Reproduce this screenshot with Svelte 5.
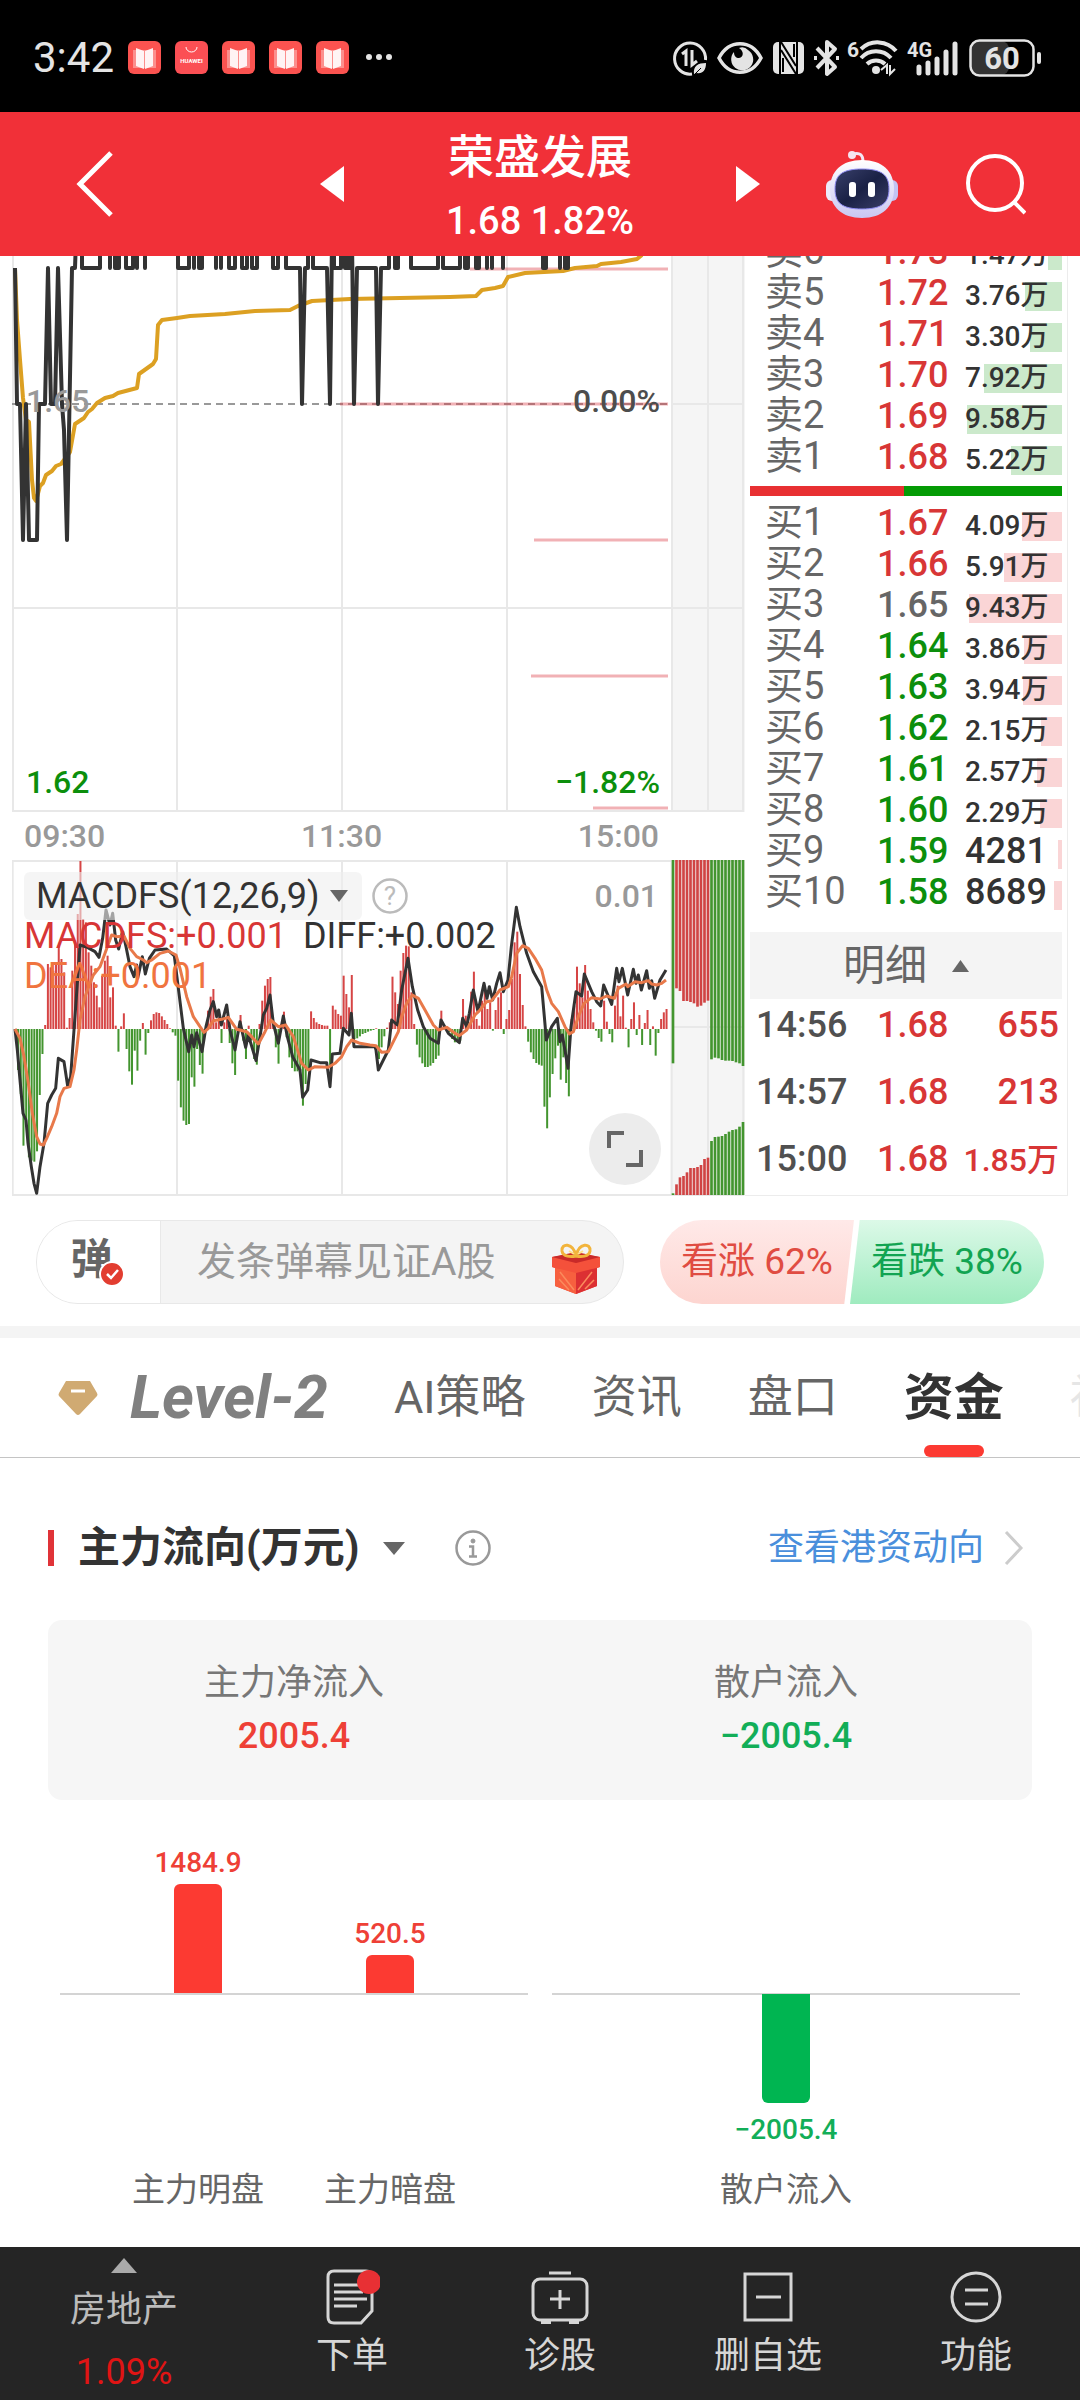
<script lang="ts">
    type Row = { name: string; price: string; volume: string; size: number; tone: string };

    const sells: Row[] = [
        { name: "卖6", price: "1.73", volume: "1.47万", size: 14, tone: "up" },
        { name: "卖5", price: "1.72", volume: "3.76万", size: 37, tone: "up" },
        { name: "卖4", price: "1.71", volume: "3.30万", size: 32, tone: "up" },
        { name: "卖3", price: "1.70", volume: "7.92万", size: 78, tone: "up" },
        { name: "卖2", price: "1.69", volume: "9.58万", size: 95, tone: "up" },
        { name: "卖1", price: "1.68", volume: "5.22万", size: 51, tone: "up" }
    ];

    const buys: Row[] = [
        { name: "买1", price: "1.67", volume: "4.09万", size: 40, tone: "up" },
        { name: "买2", price: "1.66", volume: "5.91万", size: 58, tone: "up" },
        { name: "买3", price: "1.65", volume: "9.43万", size: 93, tone: "flat" },
        { name: "买4", price: "1.64", volume: "3.86万", size: 38, tone: "down" },
        { name: "买5", price: "1.63", volume: "3.94万", size: 39, tone: "down" },
        { name: "买6", price: "1.62", volume: "2.15万", size: 21, tone: "down" },
        { name: "买7", price: "1.61", volume: "2.57万", size: 25, tone: "down" },
        { name: "买8", price: "1.60", volume: "2.29万", size: 22, tone: "down" },
        { name: "买9", price: "1.59", volume: "4281", size: 4, tone: "down" },
        { name: "买10", price: "1.58", volume: "8689", size: 8, tone: "down" }
    ];

    const trades = [
        { time: "14:56", price: "1.68", volume: "655" },
        { time: "14:57", price: "1.68", volume: "213" },
        { time: "15:00", price: "1.68", volume: "1.85万" }
    ];

    // stretches where the price rests one tick lower, as [from, to]
    const dips = (list: number[][]) => list.map(([a, b]) => `L${a} 240L${a} 268L${b} 268L${b} 240`).join("");

    const pricePath =
        "M15 268L17 404L20 404L23 540L26 404L29 540L37 540L39 404L45 404L48 268L51 404L55 404L58 268L62 404L64 430L67 540L72 268L75 268L76 240" +
        dips([[82, 100], [110, 110], [115, 119], [126, 133], [137, 137], [145, 145], [178, 189], [194, 194], [199, 202], [216, 216], [221, 221], [229, 235], [242, 247], [252, 257], [273, 278]]) +
        "L286 240L286 268L300 268L302 404L305 268L308 268L308 240L313 240L313 268L327 268L330 404L332 240" +
        dips([[334, 341], [345, 349]]) +
        "L352 240L354 404L357 268L376 268L378 404L381 268L389 268L389 240" +
        dips([[395, 398], [411, 438], [443, 460], [465, 468], [476, 479], [487, 487], [492, 492], [503, 503], [543, 546], [560, 560], [565, 568]]);

    const averageLine =
        "15,268 17,320 20,360 23,398 26,420 29,422 32,480 34,498 36,501 40,486 43,483 46,475 52,471 56,466 61,464 64,460 70,452 75,424 84,418 88,412 92,409 97,403 105,398 113,396 118,393 137,388 139,374 153,364 156,359 158,325 162,320 177,318 190,316 225,314 255,311 290,310 298,306 312,301 350,299 400,298 450,297 476,296 482,290 495,288 503,286 508,277 525,273 563,271 575,268 597,266 601,264 621,262 637,259 642,255";

    // MACDFS histogram, one value per minute
    const macd = [
        0, -123, -195, -350, -270, -385, -395, -398, -367, -198, -75, 12, 195, 185, 175, 200, 250, 210, 170, 4,
        33, 175, 265, 345, 504, 330, 320, 230, 190, 140, 100, 65, 160, 205, 220, 95, 125, 10, -68, 8,
        47, -60, -127, -167, -65, -125, -35, 18, -77, -12, 26, 45, 50, 48, 38, 27, 15, 2, -10, -20,
        -155, -235, -275, -288, -285, -145, -173, -60, -108, -134, -10, 55, 97, 120, 20, 35, -42, 20, 37, -42,
        -103, -138, -20, 42, -35, -90, 10, -35, -90, -107, 15, 85, 130, 150, 156, 20, -55, -104, 15, 52,
        -25, -85, -117, -127, -127, -125, -230, -165, -125, 53, 33, 20, 15, 12, 10, 10, -112, 70, 58, 45,
        40, 160, 105, 65, 162, -30, -28, -22, -15, -12, -8, -5, -3, 2, -90, -55, -22, 4, 20, 157,
        110, 75, 175, 228, 250, 248, 110, 15, -47, -85, -103, -114, -114, -110, -102, -90, -80, 55, 12, 3,
        -10, -30, -40, -40, -35, 90, 40, 10, 112, 172, 30, 10, 85, 115, 60, 80, -5, 57, 95, 110,
        -15, 30, 57, 150, 260, 292, 165, 72, 8, -38, -70, -90, -102, -107, -110, -233, -298, -205, -135, -88,
        -50, -152, -85, -162, -202, 30, 70, 187, 137, 95, 192, 115, 60, 20, -5, -27, -38, 85, 22, -15,
        -40, 70, 130, 38, 100, 4, -55, 30, 80, -18, 42, -48, 18, 57, -48, 8, -80, -12, 30, 50, 60
    ];

    const diffLine =
        "45,537 52,600 60,690 69,790 78,810 84,880 94,950 102,1000 110,1030 120,950 132,880 143,760 155,735 167,715 175,625 192,635 203,708 212,680 222,540 232,400 240,285 262,292 285,305 297,322 308,265 318,180 330,225 338,190 347,270 356,297 368,245 378,290 390,350 402,380 410,345 413,385 427,320 436,372 448,325 465,300 500,297 523,318 537,430 550,535 566,605 575,555 582,590 590,548 606,605 618,530 630,480 640,455 650,500 656,480 664,525 680,465 690,540 705,600 720,515 737,592 745,555 768,632 780,560 790,495 800,475 810,435 820,520 835,580 850,498 862,560 878,620 900,660 908,742 923,720 933,630 960,638 980,638 990,710 997,612 1020,610 1030,535 1047,555 1054,490 1062,590 1125,590 1128,600 1135,660 1150,630 1165,600 1175,510 1192,525 1205,420 1224,325 1237,410 1253,480 1270,530 1290,565 1315,580 1323,510 1345,550 1378,578 1388,505 1400,530 1408,490 1420,420 1434,485 1452,400 1461,445 1468,410 1478,450 1490,400 1500,368 1510,425 1524,390 1534,290 1549,172 1560,230 1580,310 1600,365 1625,410 1633,500 1639,570 1655,530 1672,505 1680,575 1687,555 1704,655 1713,530 1728,425 1745,438 1753,372 1775,425 1790,455 1802,468 1811,405 1835,463 1850,355 1857,395 1867,355 1883,435 1900,358 1908,400 1915,375 1924,420 1940,362 1948,415 1955,392 1964,445 1980,390 1998,360";

    const deaLine =
        "45,537 60,565 72,620 85,700 97,790 110,860 120,882 130,885 140,865 155,830 170,790 180,740 192,715 210,710 222,660 230,600 240,510 255,440 270,400 280,375 300,350 315,310 335,255 350,260 372,258 390,295 410,320 430,330 440,338 455,330 480,310 505,303 528,315 540,355 560,440 580,500 600,530 612,547 625,535 640,512 665,508 685,502 710,538 740,545 755,560 775,582 795,545 812,510 835,530 857,525 880,560 905,640 925,660 945,650 985,652 1005,640 1025,620 1040,590 1055,570 1080,580 1110,585 1128,587 1145,607 1165,605 1180,575 1195,545 1205,500 1220,460 1237,435 1255,445 1275,480 1300,525 1315,540 1340,532 1365,550 1378,557 1400,540 1425,495 1440,480 1460,455 1475,452 1500,420 1525,410 1535,380 1550,310 1568,287 1585,295 1605,325 1625,360 1640,420 1655,460 1675,485 1695,530 1708,552 1720,545 1735,500 1752,460 1775,443 1800,447 1820,438 1843,445 1855,415 1878,402 1883,410 1905,395 1925,398 1945,392 1955,402 1970,405 1985,400 1998,390";

    // auction columns beside the histogram: where the top and bottom blocks end
    const auctionTop = [640, 415, 423, 453, 453, 456, 460, 470, 467, 458, 452, 628, 623, 625, 630, 632, 632, 633, 637, 640, 648];
    const auctionBottom = [1030, 1003, 982, 978, 967, 954, 954, 951, 945, 927, 923, 873, 861, 860, 858, 852, 845, 840, 838, 830, 816];
    const auctionColor = (i: number) => (i > 0 && i < 11 ? "#d04444" : "#43952f");

    const tabs = ["AI策略", "资讯", "盘口", "资金", "社区"];
    const activeTab = "资金";

    const mainFlow = [
        { name: "主力明盘", value: "1484.9", height: 109 },
        { name: "主力暗盘", value: "520.5", height: 38 }
    ];
</script>

{#snippet bookApp()}
    <svg width="33" height="33" viewBox="0 0 33 33">
        <rect width="33" height="33" rx="6" fill="#fb5350" />
        <path d="M5 9h23v18H5z" fill="#fff" opacity=".35" />
        <path d="M8 7l8 3v18l-8-3zM25 7l-8 3v18l8-3z" fill="#fff" opacity=".9" />
    </svg>
{/snippet}

{#snippet book(rows: Row[], side: string, caption: string)}
    <table class="book {side}" aria-label={caption}>
        <tbody>
            {#each rows as row}
                <tr>
                    <th scope="row">{row.name}</th>
                    <td class="price {row.tone}">{row.price}</td>
                    <td class="volume">
                        <i class="depth" style="width: {row.size}px"></i>
                        <span class:small={row.volume.endsWith("万")}>{row.volume}</span>
                    </td>
                </tr>
            {/each}
        </tbody>
    </table>
{/snippet}

<div class="page">
    <div class="status">
        <div class="status-left">
            <span class="clock">3:42</span>
            {@render bookApp()}
            <svg width="33" height="33" viewBox="0 0 33 33">
                <rect width="33" height="33" rx="6" fill="#fb4f54" />
                <path d="M11 6a5.500 5 0 0 0 11 0" fill="none" stroke="#fff" stroke-width="1" />
                <text x="16.500" y="22" font-size="6" font-weight="700" text-anchor="middle" fill="#fff">HUAWEI</text>
            </svg>
            {@render bookApp()}
            {@render bookApp()}
            {@render bookApp()}
            <svg width="28" height="33" viewBox="0 0 28 33" fill="#e4e4e4">
                <circle cx="6" cy="16" r="3" /><circle cx="16" cy="16" r="3" /><circle cx="26" cy="16" r="3" />
            </svg>
        </div>
        <div class="status-right">
            <svg width="34" height="36" viewBox="0 0 34 36" fill="none" stroke="#e4e4e4" stroke-width="3">
                <path d="M19 34A15.500 15.500 0 1 1 32.500 20" />
                <path d="M9 14l4-3v15M19 10v15l5-4" />
                <path d="M21 34c-1-8 4-11 12-11c0 8-4 11-9 10z" fill="#e4e4e4" stroke="none" />
                <path d="M21 35l7-7" stroke="#000" stroke-width="1" />
            </svg>
            <svg width="46" height="36" viewBox="0 0 46 36">
                <path d="M2 18C12-1 34-1 44 18C34 37 12 37 2 18z" fill="none" stroke="#e4e4e4" stroke-width="3.500" />
                <path d="M17 12a11 11 0 1 0 14-2a8 8 0 0 0-9-2c5 3 5 9 0 10c-3 0-5-2-5-6z" fill="#e4e4e4" />
            </svg>
            <svg width="31" height="36" viewBox="0 0 31 36">
                <rect y="2" width="31" height="32" rx="5" fill="#e4e4e4" />
                <path d="M7 2v32M24 2v32" stroke="#000" stroke-width="2" />
                <path d="M8 2l15 24M8 10l15 24M10 18v14M21 4v13" stroke="#000" stroke-width="2" />
            </svg>
            <svg width="25" height="36" viewBox="0 0 25 36" fill="none" stroke="#e4e4e4" stroke-width="4">
                <path d="M3 8l18 19l-8 7V2l8 7L3 28" stroke-linejoin="round" />
                <path d="M0 18l3 0M22 18h3" />
            </svg>
            <svg width="50" height="36" viewBox="0 0 50 36" fill="none" stroke="#e4e4e4" stroke-width="4">
                <text x="-2" y="17" font-size="21" font-weight="700" fill="#e4e4e4" stroke="none">6</text>
                <path d="M12 9a24 24 0 0 1 35 2M12 18a20 20 0 0 1 30 0M18 24a13 13 0 0 1 18 0" />
                <circle cx="27" cy="30" r="4" fill="#e4e4e4" stroke="none" />
                <path d="M32 30l6-5v9M41 25v9l5-5" stroke-width="2" />
            </svg>
            <svg width="50" height="36" viewBox="0 0 50 36">
                <text x="-2" y="17" font-size="20" font-weight="700" fill="#e4e4e4">4G</text>
                <path d="M10 27v6M19 23v10M28 19v14M37 12v21M46 4v29" stroke="#e4e4e4" stroke-width="5" stroke-linecap="round" />
            </svg>
            <svg width="73" height="38" viewBox="0 0 73 38">
                <rect x="2" y="2" width="38" height="34" rx="8" fill="#333" />
                <rect x="1.500" y="1.500" width="63" height="35" rx="9" fill="none" stroke="#e4e4e4" stroke-width="2.500" />
                <rect x="68" y="13" width="4" height="12" rx="2" fill="#e4e4e4" />
                <text x="33" y="30" font-size="31" font-weight="700" text-anchor="middle" fill="#e4e4e4">60</text>
            </svg>
        </div>
    </div>

    <header>
        <button class="back" aria-label="返回">
            <svg width="38" height="66" viewBox="0 0 38 66"><path d="M35 2L4 33l31 31" fill="none" stroke="#fff" stroke-width="5" /></svg>
        </button>
        <div class="stock">
            <button aria-label="上一只"><svg width="24" height="36" viewBox="0 0 24 36"><path d="M24 0v36L0 18z" fill="#fff" /></svg></button>
            <div class="stock-text">
                <h1>荣盛发展</h1>
                <p>1.68 1.82%</p>
            </div>
            <button aria-label="下一只"><svg width="24" height="36" viewBox="0 0 24 36"><path d="M0 0v36l24-18z" fill="#fff" /></svg></button>
        </div>
        <div class="tools">
            <button aria-label="智能助手">
                <svg width="72" height="70" viewBox="0 0 72 70">
                    <defs>
                        <linearGradient id="shell" x1="0" y1="0" x2="0" y2="1">
                            <stop offset="0" stop-color="#fff" />
                            <stop offset="1" stop-color="#c9c6f2" />
                        </linearGradient>
                        <linearGradient id="visor" x1="0" y1="0" x2="1" y2="1">
                            <stop offset="0" stop-color="#39406b" />
                            <stop offset=".5" stop-color="#1a2145" />
                            <stop offset="1" stop-color="#3a3f68" />
                        </linearGradient>
                    </defs>
                    <path d="M27 5c7-2 10 1 10 8" fill="none" stroke="#f3e6f5" stroke-width="3" />
                    <circle cx="26" cy="6" r="4" fill="#f6e4f1" />
                    <rect x="0" y="31" width="12" height="21" rx="6" fill="#ecebfb" />
                    <rect x="60" y="31" width="12" height="21" rx="6" fill="#c3c4f3" />
                    <path d="M36 11c20 0 32 11 32 29S56 69 36 69S4 58 4 40S16 11 36 11z" fill="url(#shell)" />
                    <path d="M36 20c20 0 27 6 27 20s-7 20-27 20S9 54 9 40s7-20 27-20z" fill="url(#visor)" stroke="#8d8af0" stroke-width="1" />
                    <rect x="23" y="33" width="7" height="15" rx="3" fill="#fff" />
                    <rect x="42" y="33" width="7" height="15" rx="3" fill="#fff" />
                </svg>
            </button>
            <button aria-label="搜索">
                <svg width="60" height="62" viewBox="0 0 60 62" fill="none" stroke="#fff" stroke-width="4">
                    <circle cx="29" cy="30" r="27" /><path d="M48 49l11 11" />
                </svg>
            </button>
        </div>
    </header>

    <main>
        <section class="quote">
            <div class="charts">
                <svg class="chart" viewBox="12 256 733 556" role="img" aria-label="分时走势">
                    <rect x="671" y="256" width="74" height="556" fill="#f5f5f5" />
                    <g stroke="#e8e8e8" stroke-width="2" fill="none">
                        <path d="M13 256V811H744M177 256V811M342 256V811M507 256V811M672 256V811M708 256V811M743 256V811M12 608H744M673 404H744" />
                    </g>
                    <path d="M12 404H667" stroke="#999" stroke-width="2" stroke-dasharray="7 5" />
                    <path d="M470 269H668M340 404H668M534 540H668M531 676H668M593 808H668" stroke="#dc3c46" stroke-opacity=".4" stroke-width="3" />
                    <polyline points={averageLine} fill="none" stroke="#dca022" stroke-width="4" stroke-linejoin="round" />
                    <path d={pricePath} fill="none" stroke="#333" stroke-width="4" stroke-linejoin="round" />
                    <g class="scale">
                        <text x="26" y="412" fill="#999">1.65</text>
                        <text x="660" y="412" fill="#4d4d4d" text-anchor="end">0.00%</text>
                        <text x="26" y="793" fill="#0c8f0c">1.62</text>
                        <text x="660" y="793" fill="#0c8f0c" text-anchor="end">−1.82%</text>
                    </g>
                </svg>
                <div class="times"><span>09:30</span><span>11:30</span><span>15:00</span></div>
                <div class="macd">
                    <svg class="chart" viewBox="36 30 2199 1008" role="img" aria-label="MACDFS">
                        <rect x="2012" y="30" width="222" height="1008" fill="#f5f5f5" />
                        <path d="M38 30V1035H2232M36 33H2232M531 30V1035M1026 30V1035M1521 30V1035M2015 30V1035M2124 30V1035M2230 30V1035M2012 531H2232" fill="none" stroke="#e8e8e8" stroke-width="6" />
                        {#each macd as value, i}
                            <rect
                                x={43 + i * 8.14}
                                y={value > 0 ? 537 - value : 537}
                                width="6"
                                height={Math.abs(value)}
                                fill={value > 0 ? "#d64545" : "#43952f"}
                            />
                        {/each}
                        {#each auctionTop as end, i}
                            <rect x={2015 + i * 10.5} y="30" width="8" height={end - 30} fill={auctionColor(i)} />
                            <rect x={2015 + i * 10.5} y={auctionBottom[i]} width="8" height={1035 - auctionBottom[i]} fill={auctionColor(i)} />
                        {/each}
                        <polyline points={diffLine} fill="none" stroke="#333" stroke-width="9" stroke-linejoin="round" />
                        <polyline points={deaLine} fill="none" stroke="#e8794a" stroke-width="9" stroke-linejoin="round" />
                    </svg>
                    <div class="legend">
                        <div class="legend-head">
                            <button class="indicator">
                                MACDFS(12,26,9)
                                <svg width="18" height="12" viewBox="0 0 18 12"><path d="M0 0h18l-9 12z" fill="#666" /></svg>
                            </button>
                            <button aria-label="指标说明">
                                <svg width="36" height="36" viewBox="0 0 36 36">
                                    <circle cx="18" cy="18" r="16.500" fill="none" stroke="#bbb" stroke-width="2.500" />
                                    <text x="18" y="27" font-size="26" text-anchor="middle" fill="#bbb">?</text>
                                </svg>
                            </button>
                            <span class="peak">0.01</span>
                        </div>
                        <div class="legend-values">
                            <span class="up">MACDFS:+0.001</span>
                            <span class="diff">DIFF:+0.002</span>
                            <span class="dea">DEA:+0.001</span>
                        </div>
                    </div>
                    <button class="expand" aria-label="横屏">
                        <svg width="38" height="38" viewBox="0 0 38 38" fill="none" stroke="#666" stroke-width="4">
                            <path d="M3 18V3h15M35 20v15H20" />
                        </svg>
                    </button>
                </div>
            </div>

            <div class="panel">
                {@render book(sells, "sell", "卖盘")}
                <div class="ratio"><i style="flex-grow: 154"></i><i style="flex-grow: 158"></i></div>
                {@render book(buys, "buy", "买盘")}
                <button class="detail">
                    明细
                    <svg width="17" height="12" viewBox="0 0 17 12"><path d="M8.500 0L17 12H0z" fill="#666" /></svg>
                </button>
                <table class="trades" aria-label="成交明细">
                    <tbody>
                        {#each trades as trade}
                            <tr>
                                <td class="time">{trade.time}</td>
                                <td class="up deal">{trade.price}</td>
                                <td class="up amount"><span class:small={trade.volume.endsWith("万")}>{trade.volume}</span></td>
                            </tr>
                        {/each}
                    </tbody>
                </table>
            </div>
        </section>

        <section class="talk">
            <div class="danmaku">
                <button class="danmaku-switch" aria-label="弹幕开关">
                    弹
                    <svg class="tick" width="26" height="26" viewBox="0 0 26 26">
                        <circle cx="13" cy="13" r="12" fill="#e23d30" stroke="#fff" stroke-width="2" />
                        <path d="M8 13l4 4l7-8" fill="none" stroke="#fff" stroke-width="2.500" />
                    </svg>
                </button>
                <input type="text" placeholder="发条弹幕见证A股" aria-label="发条弹幕见证A股" />
                <button class="gift" aria-label="礼物">
                    <svg width="50" height="52" viewBox="0 0 50 52">
                        <path d="M1 15l24-4l24 4v10l-3 1v18L25 52L4 44V26l-3-1z" fill="#ee4836" />
                        <path d="M25 28v24L4 44V26z" fill="#f7603f" />
                        <path d="M25 28v24l21-8V26z" fill="#dc3033" />
                        <path d="M1 15l24 6l24-6v10l-24 6l-24-6z" fill="#f4513b" />
                        <path d="M1 15l24-5l24 5l-24 6z" fill="#c92a29" />
                        <path d="M9 30l14 18M8 37l10 11M41 30L27 48M43 38l-9 9" stroke="#fb8a5c" stroke-width="1.500" />
                        <path d="M25 14c-5 1-13 1-14-5c-1-8 11-9 14 5c3-14 15-13 14-5c-1 6-9 6-14 5z" fill="none" stroke="#f2b43c" stroke-width="3" />
                        <path d="M23 12l-5-3M27 12l5-3" stroke="#ffe08a" stroke-width="2" />
                    </svg>
                </button>
            </div>
            <div class="vote">
                <button class="rise">看涨 62%</button>
                <button class="fall">看跌 38%</button>
            </div>
        </section>

        <nav class="tabs">
            <button class="level">
                <svg width="40" height="36" viewBox="0 0 40 36">
                    <path d="M8 1h24l7 12q1 2 0 3L22 34q-2 2-4 0L1 16q-1-1 0-3z" fill="#d0aa72" />
                    <path d="M13 11h14" stroke="#fff" stroke-width="3" />
                </svg>
                <span>Level-2</span>
            </button>
            {#each tabs as tab}
                <button class:active={tab === activeTab} class:faded={tab === "社区"}>{tab}</button>
            {/each}
        </nav>

        <section class="funds">
            <div class="funds-head">
                <h2>主力流向(万元)</h2>
                <svg width="22" height="13" viewBox="0 0 22 13"><path d="M0 0h22L11 13z" fill="#666" /></svg>
                <button class="info" aria-label="说明">
                    <svg width="36" height="36" viewBox="0 0 36 36" fill="none" stroke="#999" stroke-width="2.500">
                        <circle cx="18" cy="18" r="16.500" />
                        <circle cx="18" cy="11" r="2" fill="#999" stroke-width="1" />
                        <path d="M14 16.500h4V26M14 26.500h8" />
                    </svg>
                </button>
                <a href="#hk">
                    查看港资动向
                    <svg width="20" height="36" viewBox="0 0 20 36"><path d="M2 2l15 16L2 34" fill="none" stroke="#ccc" stroke-width="3" /></svg>
                </a>
            </div>

            <dl class="summary">
                <div><dt>主力净流入</dt><dd class="inflow">2005.4</dd></div>
                <div><dt>散户流入</dt><dd class="outflow">−2005.4</dd></div>
            </dl>

            <div class="flows">
                <div class="flow">
                    {#each mainFlow as item}
                        <div class="column">
                            <div class="above">
                                <span class="inflow">{item.value}</span>
                                <i style="height: {item.height}px"></i>
                            </div>
                            <div class="below"></div>
                            <span class="name">{item.name}</span>
                        </div>
                    {/each}
                </div>
                <div class="flow">
                    <div class="column">
                        <div class="above"></div>
                        <div class="below">
                            <i style="height: {109}px"></i>
                            <span class="outflow">−2005.4</span>
                        </div>
                        <span class="name">散户流入</span>
                    </div>
                </div>
            </div>
        </section>
    </main>

    <footer>
        <button class="sector">
            <svg width="26" height="15" viewBox="0 0 26 15"><path d="M13 0l13 15H0z" fill="#aaa" /></svg>
            <span>房地产</span>
            <span class="change">1.09%</span>
        </button>
        <button>
            <svg width="56" height="56" viewBox="0 0 56 56" fill="none" stroke="#d6d6d6" stroke-width="3">
                <path d="M10 2h32q6 0 6 6v34L37 54H10q-6 0-6-6V8q0-6 6-6z" />
                <path d="M10 16h25M10 23h29M10 30h33M10 37h23" />
                <circle cx="45" cy="13" r="12" fill="#e83034" stroke="none" />
            </svg>
            <span>下单</span>
        </button>
        <button>
            <svg width="58" height="56" viewBox="0 0 58 56" fill="none" stroke="#d6d6d6" stroke-width="3">
                <rect x="2" y="10" width="54" height="41" rx="7" />
                <path d="M18 4h22M29 21v19M19 30h20" />
                <path d="M10 53h10M38 53h10" stroke-width="4" />
            </svg>
            <span>诊股</span>
        </button>
        <button>
            <svg width="56" height="56" viewBox="0 0 56 56" fill="none" stroke="#d6d6d6" stroke-width="3">
                <rect x="5" y="5" width="46" height="46" /><path d="M16 28h25" />
            </svg>
            <span>删自选</span>
        </button>
        <button>
            <svg width="56" height="56" viewBox="0 0 56 56" fill="none" stroke="#d6d6d6" stroke-width="3">
                <circle cx="28" cy="28" r="24" /><path d="M17 21h23M17 35h23" />
            </svg>
            <span>功能</span>
        </button>
    </footer>
</div>

<style>
    .page {
        display: flex;
        flex-direction: column;
        min-height: 100vh;
        overflow: hidden;
        background: #fff;
        color: #333;
        font-family: Roboto, "Noto Sans CJK SC", sans-serif;
        font-size: 36px;
        line-height: 1.4;
    }

    svg {
        display: block;
        flex: none;
    }

    button {
        padding: 0;
        border: 0;
        background: none;
        color: inherit;
        font: inherit;
    }

    h1, h2, p, dl, dd {
        margin: 0;
    }

    .up { color: #d83636; }
    .flat { color: #666; }
    .down { color: #0c8f0c; }
    .inflow { color: #ee4036; }
    .outflow { color: #12ae58; }

    .status {
        display: flex;
        justify-content: space-between;
        align-items: center;
        height: 112px;
        box-sizing: border-box;
        padding: 4px 38px 0 33px;
        background: #000;
        color: #e4e4e4;
    }

    .status svg {
        overflow: visible;
    }

    .status-left,
    .status-right {
        display: flex;
        align-items: center;
        gap: 14px;
    }

    .status-right {
        gap: 10px;
    }

    .clock {
        font-size: 42px;
    }

    header {
        display: grid;
        grid-template-columns: 1fr auto 1fr;
        align-items: center;
        height: 144px;
        padding: 0 54px;
        background: #f13038;
        color: #fff;
    }

    .back {
        justify-self: start;
        margin-left: 22px;
    }

    .stock {
        display: flex;
        align-items: center;
        gap: 102px;
    }

    .stock-text {
        padding-top: 6px;
        text-align: center;
        font-weight: 500;
    }

    h1 {
        font-size: 46px;
        font-weight: 500;
        line-height: 68px;
    }

    .stock-text p {
        font-size: 38px;
        line-height: 60px;
    }

    .tools {
        display: flex;
        justify-content: flex-end;
        align-items: center;
        gap: 68px;
    }

    .quote {
        display: grid;
        grid-template-columns: 733fr 323fr;
        padding: 0 12px;
        overflow: hidden;
    }

    .chart {
        width: 100%;
        height: auto;
    }

    .scale {
        font-size: 32px;
        font-weight: 500;
    }

    .times {
        display: flex;
        justify-content: space-between;
        padding: 0 86px 0 12px;
        color: #999;
        font-size: 32px;
        font-weight: 500;
        line-height: 48px;
    }

    .macd {
        position: relative;
    }

    .legend {
        position: absolute;
        inset: 12px 87px auto 12px;
    }

    .legend-head {
        display: flex;
        align-items: center;
        gap: 10px;
    }

    .indicator {
        display: flex;
        align-items: center;
        gap: 10px;
        padding: 0 14px 0 12px;
        border-radius: 6px;
        background: rgba(238, 238, 238, 0.6);
        line-height: 48px;
    }

    .peak {
        margin-left: auto;
        color: #999;
        font-size: 32px;
        font-weight: 500;
        line-height: 40px;
    }

    .legend-values {
        display: flex;
        flex-wrap: wrap;
        column-gap: 16px;
        width: 500px;
        margin-top: -4px;
        line-height: 40px;
    }

    .dea {
        color: #f0743f;
    }

    .expand {
        position: absolute;
        right: 84px;
        bottom: 11px;
        display: grid;
        place-items: center;
        width: 72px;
        height: 72px;
        border-radius: 50%;
        background: #ececec;
    }

    .panel {
        padding: 0 5px;
        border: solid #ececec;
        border-width: 0 1px 1px 0;
    }

    table {
        width: 100%;
        table-layout: fixed;
        border-collapse: collapse;
    }

    td,
    th {
        padding: 0;
        vertical-align: baseline;
        text-align: left;
        white-space: nowrap;
    }

    .book.sell {
        margin-top: -25px;
    }

    .book tr {
        height: 41px;
    }

    .book th {
        width: 112px;
        padding-left: 15px;
        color: #666;
        font-size: 38px;
        font-weight: 400;
        line-height: 41px;
    }

    .book .price {
        width: 88px;
        font-weight: 500;
        line-height: 39px;
    }

    .volume {
        position: relative;
        line-height: 39px;
        font-weight: 500;
    }

    .volume span {
        position: relative;
    }

    .small {
        font-size: 28px;
        line-height: 30px;
    }

    .depth {
        position: absolute;
        right: 0;
        top: 10px;
        height: 29px;
    }

    .sell .depth { background: #cbe9cb; }
    .buy .depth { background: #fad5d6; }

    .ratio {
        display: flex;
        height: 10px;
        margin: 9px 0 6px;
        background: #049b05;
    }

    .ratio i:first-child {
        background: #e83032;
    }

    .detail {
        display: flex;
        justify-content: center;
        align-items: center;
        gap: 25px;
        width: 100%;
        margin-top: 20px;
        background: #f4f4f4;
        color: #666;
        font-size: 42px;
        line-height: 67px;
    }

    .trades td {
        padding-bottom: 15px;
        font-weight: 500;
        line-height: 52px;
    }

    .trades tr:last-child td {
        padding-bottom: 0;
    }

    .trades .time {
        width: 121px;
        padding-left: 6px;
        color: #505050;
    }

    .trades .deal {
        width: 80px;
    }

    .trades .amount {
        padding-right: 3px;
        text-align: right;
    }

    .trades .small {
        font-size: 32px;
    }

    .talk {
        display: flex;
        justify-content: space-between;
        padding: 24px 36px 22px;
        border-bottom: 12px solid #f4f4f4;
    }

    .danmaku {
        display: flex;
        align-items: center;
        width: 588px;
        height: 84px;
        box-sizing: border-box;
        border: 1px solid #e8e8e8;
        border-radius: 42px;
        overflow: hidden;
        background: #f4f4f4;
    }

    .danmaku-switch {
        position: relative;
        flex: none;
        width: 124px;
        height: 100%;
        padding: 0 14px 4px 0;
        border-right: 1px solid #e8e8e8;
        background: #fff;
        color: #666;
        font-size: 42px;
        font-weight: 700;
    }

    .tick {
        position: absolute;
        left: 62px;
        top: 40px;
    }

    input {
        flex: 1;
        min-width: 0;
        padding: 0 0 0 36px;
        border: 0;
        background: none;
        font: inherit;
        font-size: 39px;
    }

    input::placeholder {
        color: #999;
        opacity: 1;
    }

    .gift {
        padding: 12px 22px 0 0;
    }

    .vote {
        display: flex;
        width: 384px;
        height: 84px;
        overflow: hidden;
        border-radius: 42px;
    }

    .vote button {
        flex: none;
        width: 194px;
        font-size: 37px;
    }

    .rise {
        background: linear-gradient(#ffe9e8, #fdd5d0);
        clip-path: polygon(0 0, 100% 0, 95% 100%, 0 100%);
        color: #e04c42;
    }

    .vote .fall {
        margin-left: -4px;
        background: linear-gradient(#dcf9e8, #9febbf);
        clip-path: polygon(5% 0, 100% 0, 100% 100%, 0 100%);
        color: #12a452;
    }

    .tabs {
        display: flex;
        align-items: center;
        gap: 66px;
        height: 119px;
        padding-left: 58px;
        border-bottom: 1px solid #c4c4c4;
        overflow: hidden;
        color: #666;
        font-size: 45px;
        white-space: nowrap;
    }

    .tabs button {
        position: relative;
        flex: none;
        height: 100%;
    }

    .tabs .level {
        display: flex;
        align-items: center;
        gap: 32px;
        color: #808080;
        font-size: 61px;
        font-style: italic;
        font-weight: 700;
    }

    .tabs .active {
        color: #333;
        font-size: 50px;
        font-weight: 700;
    }

    .tabs .active::after {
        content: "";
        position: absolute;
        left: 50%;
        bottom: 0;
        width: 60px;
        height: 12px;
        margin-left: -30px;
        border-radius: 6px;
        background: #fc3a32;
    }

    .tabs .faded {
        color: #e6e6e6;
    }

    .funds {
        padding: 60px 48px 0;
    }

    .funds-head {
        display: flex;
        align-items: center;
        height: 60px;
        padding-right: 8px;
    }

    h2 {
        display: flex;
        align-items: center;
        margin-right: 24px;
        font-size: 42px;
        font-weight: 700;
    }

    h2::before {
        content: "";
        width: 6px;
        height: 36px;
        margin-right: 24px;
        background: #e03338;
    }

    .info {
        margin-left: 50px;
    }

    .funds-head a {
        display: flex;
        align-items: center;
        gap: 20px;
        margin-left: auto;
        color: #4a8fdc;
        text-decoration: none;
    }

    .summary {
        display: grid;
        grid-template-columns: 1fr 1fr;
        margin-top: 42px;
        padding: 40px 0 34px;
        border-radius: 14px;
        background: #f6f6f6;
        text-align: center;
    }

    dt {
        color: #777;
        line-height: 46px;
    }

    dd {
        font-weight: 500;
        line-height: 60px;
    }

    .flows {
        display: flex;
        gap: 24px;
        padding: 0 12px;
        font-size: 28px;
        font-weight: 500;
        line-height: 42px;
    }

    .flow {
        flex: 1;
        display: flex;
        justify-content: center;
        background: linear-gradient(#d4d4d4, #d4d4d4) 0 193px / 100% 2px no-repeat;
    }

    .column {
        width: 41%;
        text-align: center;
    }

    .above,
    .below {
        display: flex;
        flex-direction: column;
        align-items: center;
    }

    .above {
        justify-content: flex-end;
        height: 193px;
    }

    .below {
        height: 172px;
        padding-top: 1px;
    }

    .above i,
    .below i {
        width: 48px;
        border-radius: 6px 6px 0 0;
        background: #fc3a32;
    }

    .below i {
        margin-bottom: 6px;
        border-radius: 0 0 6px 6px;
        background: #00b551;
    }

    .name {
        color: #666;
        font-size: 33px;
        font-weight: 400;
        line-height: 48px;
    }

    footer {
        display: grid;
        grid-template-columns: 248fr 208fr 208fr 208fr 208fr;
        height: 153px;
        margin-top: auto;
        background: #252525;
        color: #d6d6d6;
        line-height: 50px;
    }

    footer button {
        display: flex;
        flex-direction: column;
        align-items: center;
        padding-top: 22px;
    }

    footer button svg {
        margin-bottom: 6px;
    }

    footer .sector {
        padding-top: 11px;
        color: #bbb;
    }

    .sector svg {
        margin-bottom: 12px;
    }

    .sector .change {
        margin-top: 12px;
        color: #e01414;
    }
</style>
